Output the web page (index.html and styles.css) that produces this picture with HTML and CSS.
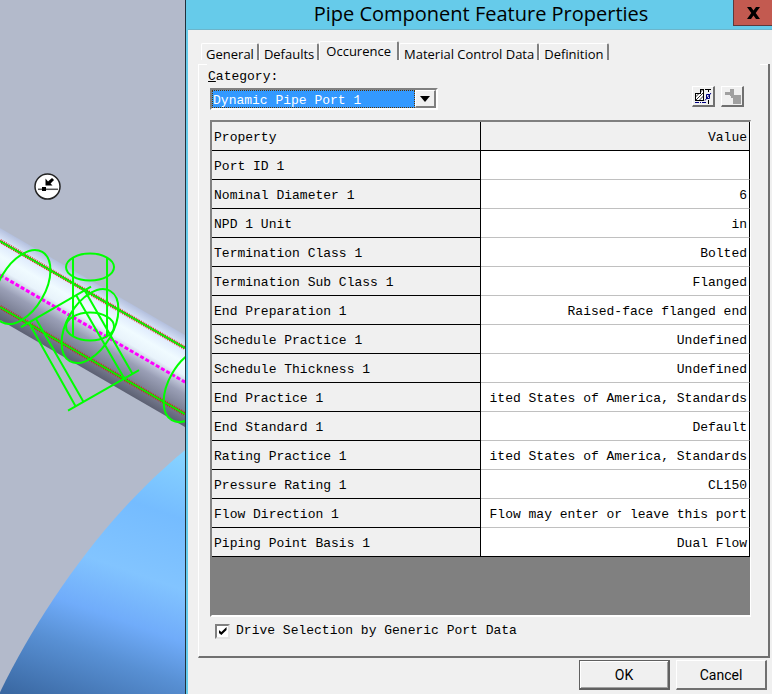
FILE: index.html
```html
<!DOCTYPE html>
<html lang="en">
<head>
<meta charset="utf-8">
<title>Pipe Component Feature Properties</title>
<link rel="stylesheet" href="styles.css">
</head>
<body>
<div class="app">
  <div class="scene">
    <svg class="model" viewBox="0 0 185 694" preserveAspectRatio="xMinYMin slice" aria-hidden="true">
      <defs>
        <linearGradient id="pipe" gradientUnits="userSpaceOnUse" x1="0" y1="228" x2="-40" y2="297">
          <stop offset="0" stop-color="#b4c0de"/>
          <stop offset=".14" stop-color="#dce8fc"/>
          <stop offset=".3" stop-color="#f0fbff"/>
          <stop offset=".44" stop-color="#e8f3fb"/>
          <stop offset=".54" stop-color="#bcc2d6"/>
          <stop offset=".64" stop-color="#9a9fb6"/>
          <stop offset=".85" stop-color="#787d91"/>
          <stop offset="1" stop-color="#5c6072"/>
        </linearGradient>
        <linearGradient id="tank" gradientUnits="userSpaceOnUse" x1="185" y1="450" x2="90" y2="722">
          <stop offset="0" stop-color="#88d4ff"/>
          <stop offset=".23" stop-color="#75bcff"/>
          <stop offset=".46" stop-color="#82c4ff"/>
          <stop offset=".63" stop-color="#70acfa"/>
          <stop offset=".77" stop-color="#5890d4"/>
          <stop offset="1" stop-color="#3a68a2"/>
        </linearGradient>
      </defs>
      <path fill="url(#tank)" d="M0 692C40 610 105 515 185 450V694H0z"/>
      <path fill="url(#pipe)" d="M0 228L185 335V427L0 320z"/>
      <g fill="none" stroke="#0f0" stroke-width="2">
        <path stroke="#e01800" stroke-width="4" stroke-dasharray="1 1" d="M0 241L185 348M0 307L185 414"/>
        <path stroke="#0ce800" d="M0 241L185 348M0 307L185 414"/>
        <path stroke="#f0f" stroke-width="3" stroke-dasharray="4 2" d="M0 275L185 382"/>
        <ellipse cx="22" cy="287" rx="23" ry="40.5" transform="rotate(30 22 287)"/>
        <ellipse cx="90" cy="326" rx="23" ry="40.5" transform="rotate(30 90 326)"/>
        <ellipse cx="192" cy="385" rx="23" ry="40.5" transform="rotate(30 192 385)"/>
        <ellipse cx="90" cy="267" rx="24" ry="13.5"/>
        <ellipse cx="90" cy="326.5" rx="24" ry="14"/>
        <path d="M73 257V336M107 257V336M21 327L91 286.500M68 410.500L139 370M29 323L76 407M36 319L83 401M76 295L124 378M85 291L132 373"/>
      </g>
      <circle cx="47.500" cy="186.500" r="12.500" fill="#fff" stroke="#222" stroke-width="1.500"/>
      <path stroke="#555" stroke-width="1.500" d="M38 189.250H58"/>
      <path d="M42 187h4v4h-4zM45.500 178.500V185.500H52.500L50.500 183.500L54 180L52 178L48 181.500z"/>
    </svg>
  </div>

  <form class="dialog">
    <header class="titlebar">
      <h1>Pipe Component Feature Properties</h1>
      <button type="button" class="close" aria-label="Close">
        <svg width="13" height="12" viewBox="0 0 13 12"><path d="M0 0H4L6.500 3.500L9 0H13L8.700 6L13 12H9L6.500 8.500L4 12H0L4.300 6z"/></svg>
      </button>
    </header>

    <nav class="tabs" role="tablist">
      <button type="button" role="tab">General</button>
      <button type="button" role="tab">Defaults</button>
      <button type="button" role="tab" class="active" aria-selected="true">Occurence</button>
      <button type="button" role="tab">Material Control Data</button>
      <button type="button" role="tab">Definition</button>
    </nav>

    <section class="panel">
      <label class="category" for="category"><u>C</u>ategory:</label>
      <div class="toolbar">
        <div class="combo">
          <select id="category"><option>Dynamic Pipe Port 1</option></select>
          <span class="drop"><svg width="10" height="6" viewBox="0 0 10 6"><path d="M0 0H10L5 6z"/></svg></span>
        </div>
        <div class="tools">
          <button type="button" aria-label="Port dimensions">
            <svg width="18" height="16" viewBox="0 0 18 16" fill="none">
              <path fill="#fff" stroke="#000" shape-rendering="crispEdges" d="M1.500 5.500H6.500V1.500H9.500V12.500H1.500z"/>
              <path stroke="#000" stroke-width=".8" d="M1.500 9L5 5.500M2 12L9.500 4.500M5.500 12L9.500 8M6.500 4L9 1.500"/>
              <path stroke="#000" shape-rendering="crispEdges" d="M11 1.500H17M14.500 1V4M14.500 12V16"/>
              <path stroke="#000080" d="M12.500 6.500H15.500V10.500H12.500zM11 12.500L17 5"/>
              <path stroke="#000080" shape-rendering="crispEdges" d="M1 14.500H5M6 14.500H7M8 14.500H12"/>
            </svg>
          </button>
          <button type="button" aria-label="Component" disabled>
            <svg width="18" height="16" viewBox="0 0 18 16"><path fill="#a0a0a0" d="M7 1H11V7H18V16H10V10H8V8H7V7H2V4H7z"/></svg>
          </button>
        </div>
      </div>

      <div class="grid">
        <table>
          <thead><tr><th scope="col">Property</th><th scope="col">Value</th></tr></thead>
          <tbody>
            <tr><th scope="row">Port ID 1</th><td></td></tr>
            <tr><th scope="row">Nominal Diameter 1</th><td>6</td></tr>
            <tr><th scope="row">NPD 1 Unit</th><td>in</td></tr>
            <tr><th scope="row">Termination Class 1</th><td>Bolted</td></tr>
            <tr><th scope="row">Termination Sub Class 1</th><td>Flanged</td></tr>
            <tr><th scope="row">End Preparation 1</th><td>Raised-face flanged end</td></tr>
            <tr><th scope="row">Schedule Practice 1</th><td>Undefined</td></tr>
            <tr><th scope="row">Schedule Thickness 1</th><td>Undefined</td></tr>
            <tr><th scope="row">End Practice 1</th><td>ited States of America, Standards</td></tr>
            <tr><th scope="row">End Standard 1</th><td>Default</td></tr>
            <tr><th scope="row">Rating Practice 1</th><td>ited States of America, Standards</td></tr>
            <tr><th scope="row">Pressure Rating 1</th><td>CL150</td></tr>
            <tr><th scope="row">Flow Direction 1</th><td>Flow may enter or leave this port</td></tr>
            <tr><th scope="row">Piping Point Basis 1</th><td>Dual Flow</td></tr>
          </tbody>
        </table>
      </div>

      <label class="check"><input type="checkbox" checked>Drive Selection by Generic Port Data</label>
    </section>

    <footer class="actions">
      <button type="submit" class="default">OK</button>
      <button type="button">Cancel</button>
    </footer>
  </form>
</div>
</body>
</html>
```
FILE: styles.css
```css
* { box-sizing: border-box; }

body {
  margin: 0;
  background: #b3bacb;
  color: #000;
  font-family: Roboto, "Open Sans", sans-serif;
}

button, select, input { font: inherit; color: inherit; margin: 0; }

.app {
  display: grid;
  grid-template-columns: 241fr 759fr;
  min-height: 100vh;
}

.scene { overflow: hidden; border-right: 1px solid #22303a; }
.model { display: block; width: 100%; height: 100%; }

.dialog {
  display: flex;
  flex-direction: column;
  min-width: 0;
  background: #f0f0f0;
  border-left: 2px solid #66cbea;
}

.titlebar {
  display: flex;
  height: 30px;
  background: #66cbea;
  border-bottom: 1px solid #6cb5cb;
}
.titlebar h1 {
  flex: 1;
  margin: 0;
  padding-left: 41px;
  font-family: "Open Sans", "Noto Sans", sans-serif;
  font-size: 20px;
  font-weight: 400;
  line-height: 28px;
  text-align: center;
}
.close {
  width: 39px;
  height: 26px;
  padding: 0;
  border: 1px solid #5c3a3c;
  border-width: 0 0 1px 1px;
  background: #c35a50;
}
.close svg { display: block; margin: 0 auto; }

.tabs {
  display: flex;
  align-items: flex-end;
  padding: 11px 0 0 13px;
  font-family: "Open Sans", "Noto Sans", sans-serif;
  font-size: 13px;
}
.tabs button {
  height: 17px;
  padding: 1px 3px 0 4px;
  border: solid;
  border-width: 1px 2px 0 1px;
  border-color: #fff #808080 #fff #fff;
  border-radius: 2px 2px 0 0;
  background: none;
  line-height: 18px;
  white-space: nowrap;
}
.tabs .active { height: 19px; padding: 0 6px; }

.panel {
  position: relative;
  margin: 4px 2px 0 10px;
  padding: 5px 17px 17px 11px;
  border: solid;
  border-width: 0 2px 2px 1px;
  border-color: #fff #707070 #707070 #fff;
  font-family: "Liberation Mono", monospace;
  font-size: 13px;
  line-height: 16px;
}
.panel::before, .panel::after {
  content: "";
  position: absolute;
  top: 0;
  width: 8px;
  height: 1px;
  background: #fff;
}
.panel::before { left: 0; }
.panel::after { right: 0; }

.category { display: block; margin-left: -2px; }

.toolbar {
  display: flex;
  justify-content: space-between;
  align-items: flex-start;
  margin-top: 1px;
}
.combo {
  display: flex;
  width: 228px;
  height: 22px;
  margin-top: 2px;
  border: 2px solid;
  border-color: #808080 #fff #fff #808080;
}
.combo select {
  flex: 1;
  min-width: 0;
  appearance: none;
  padding: 2px 0 0;
  border: 1px dotted #5a3200;
  border-radius: 0;
  outline: 0;
  background: #3399ff;
  color: #fff;
}
.drop {
  display: grid;
  place-items: center;
  width: 21px;
  background: #f0f0f0;
  border: solid;
  border-width: 1px 2px 2px 1px;
  border-color: #fff #808080 #808080 #fff;
}
.tools { display: flex; gap: 6px; margin-right: 7px; }
.tools button {
  display: grid;
  place-items: center;
  width: 23px;
  height: 21px;
  padding: 0;
  border: 1px solid;
  border-width: 1px 2px 2px 1px;
  border-color: #fff #707070 #707070 #fff;
  background: #f0f0f0;
}

.grid {
  margin-top: 10px;
  padding-bottom: 58px;
  background: #808080;
  border: solid;
  border-width: 2px 1px 2px 2px;
  border-color: #808080 #fff #fff #808080;
}
table {
  width: 100%;
  table-layout: fixed;
  border-collapse: separate;
  border-spacing: 0;
}
th, td {
  height: 29px;
  padding: 4px 2px 0;
  font-weight: 400;
  white-space: nowrap;
  overflow: hidden;
  border-right: 1px solid #000;
  border-bottom: 1px solid #000;
}
th { background: #f0f0f0; text-align: left; }
td { background: #fff; text-align: right; border-bottom-color: #c0c0c0; }
thead th:last-child { text-align: right; }
tr:last-child td { border-bottom-color: #000; }

.check {
  display: flex;
  align-items: center;
  gap: 6px;
  width: max-content;
  margin-top: 6px;
  padding-left: 5px;
}
.check input {
  appearance: none;
  display: grid;
  place-items: center;
  width: 15px;
  height: 15px;
  background: #fff;
  border: 2px solid;
  border-color: #808080 #e4e4e4 #e4e4e4 #808080;
}
.check input:checked::before {
  content: "";
  width: 8px;
  height: 8px;
  background: #000;
  clip-path: polygon(0 35%, 35% 62%, 100% 0, 100% 38%, 35% 100%, 0 72%);
}

.actions {
  display: flex;
  justify-content: flex-end;
  gap: 6px;
  padding: 2px 5px 3px 0;
  font-size: 14px;
}
.actions button {
  width: 91px;
  height: 30px;
  padding: 0;
  background: #f0f0f0;
  border: solid;
  border-width: 1px 2px 2px 1px;
  border-color: #fff #707070 #707070 #fff;
}
.actions .default {
  border-color: #606060;
  box-shadow: inset 1px 1px #fff, inset -1px -1px #a0a0a0;
}
```
